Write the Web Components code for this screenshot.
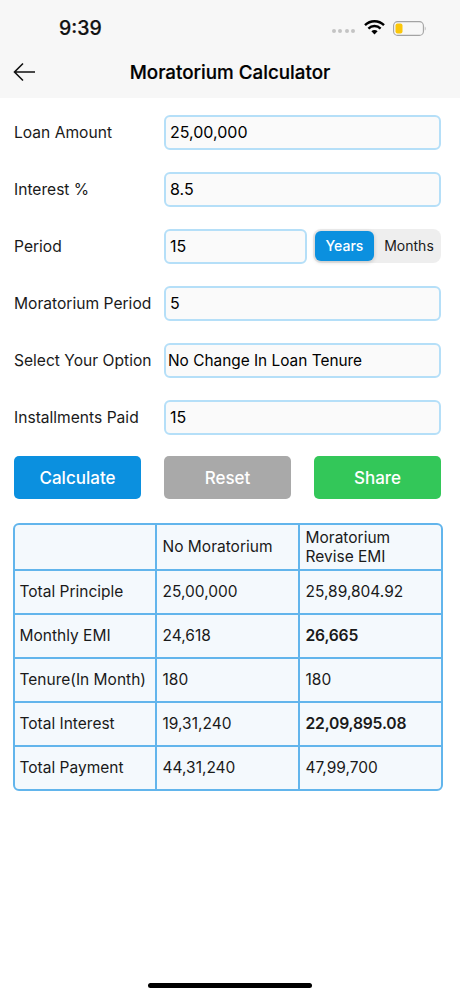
<!DOCTYPE html>
<html>
<head>
<meta charset="utf-8">
<style>
  html, body { margin: 0; padding: 0; background: #fff; }
  body { font-family: Inter, "Liberation Sans", sans-serif; color: #111; }
  calc-app { height: 997px; }
</style>
</head>
<body>
<calc-app>
  <status-bar slot="top" time="9:39"></status-bar>
  <nav-bar slot="top">Moratorium Calculator</nav-bar>
  <form-row label="Loan Amount"><text-box>25,00,000</text-box></form-row>
  <form-row label="Interest %"><text-box>8.5</text-box></form-row>
  <form-row label="Period">
    <text-box style="flex:0 0 143px">15</text-box>
    <seg-control></seg-control>
  </form-row>
  <form-row label="Moratorium Period"><text-box>5</text-box></form-row>
  <form-row label="Select Your Option"><text-box small>No Change In Loan Tenure</text-box></form-row>
  <form-row label="Installments Paid"><text-box>15</text-box></form-row>
  <button-row>
    <action-button color="#0b90df">Calculate</action-button>
    <action-button color="#a9a9a9">Reset</action-button>
    <action-button color="#33c759">Share</action-button>
  </button-row>
  <result-table></result-table>
</calc-app>

<script>
  // makes an element class from a template string
  function shadow(el, html) {
    el.attachShadow({mode: 'open'}).innerHTML = html;
  }

  class CalcApp extends HTMLElement {
    constructor() {
      super();
      shadow(this, `
        <style>
          :host { display: flex; flex-direction: column; overflow: hidden; }
          .form { display: flex; flex-direction: column; gap: 22px; padding: 17px 19px 0 14px; }
          .bar { margin: auto auto 9px; width: 164px; height: 5px; border-radius: 3px; background: #000; flex: none; }
        </style>
        <slot name="top"></slot>
        <div class="form"><slot></slot></div>
        <div class="bar"></div>
      `);
    }
  }

  class StatusBar extends HTMLElement {
    constructor() {
      super();
      shadow(this, `
        <style>
          :host { display: flex; align-items: center; height: 56px; background: #f7f7f7; box-sizing: border-box; padding: 0 34px 0 59px; }
          .time { font-size: 19.500px; font-weight: 500; color: #111; -webkit-text-stroke: .2px #111; }
          .right { margin-left: auto; display: flex; align-items: center; }
          .dots { display: flex; gap: 2.500px; margin: 6px 9px 0 0; }
          .dots i { width: 4px; height: 4px; border-radius: 50%; background: #c4c4c4; }
          .wifi { margin-top: -2px; }
          .batt { width: 33px; height: 15px; margin-left: 8px; display: block; }
        </style>
        <span class="time">${this.getAttribute('time')}</span>
        <div class="right">
          <div class="dots"><i></i><i></i><i></i><i></i></div>
          <svg class="wifi" width="21" height="16" viewBox="0 0 21 16">
            <path d="M1 6.2a13.4 13.4 0 0 1 19 0" fill="none" stroke="#000" stroke-width="2.400"/>
            <path d="M4.400 9.600a8.600 8.600 0 0 1 12.200 0" fill="none" stroke="#000" stroke-width="2.400"/>
            <path d="M7.400 12.200a4.300 4.300 0 0 1 6.200 0L10.500 15.400z" fill="#000"/>
          </svg>
          <svg class="batt" viewBox="0 0 33 15">
            <rect x=".6" y=".6" width="29.800" height="13.800" rx="4" fill="none" stroke="#a3a3a3" stroke-width="1.100"/>
            <rect x="2.500" y="2.500" width="7" height="10" rx="2" fill="#fbc70a"/>
            <path d="M31.800 5.500c.9.3 1 3.700 0 4z" fill="#a3a3a3"/>
          </svg>
        </div>
      `);
    }
  }

  class NavBar extends HTMLElement {
    constructor() {
      super();
      shadow(this, `
        <style>
          :host { display: flex; align-items: center; justify-content: center; position: relative; height: 42px; background: #f7f7f7; }
          .title { font-size: 18.800px; font-weight: 500; color: #000; margin-top: -10px; -webkit-text-stroke: .2px #000; }
          svg { position: absolute; left: 13px; top: 6px; }
        </style>
        <svg width="23" height="20" viewBox="0 0 23 20">
          <path d="M22 10H1.500M10 1.500 1.500 10l8.500 8.500" fill="none" stroke="#111" stroke-width="1.600"/>
        </svg>
        <span class="title"><slot></slot></span>
      `);
    }
  }

  class FormRow extends HTMLElement {
    constructor() {
      super();
      shadow(this, `
        <style>
          :host { display: flex; align-items: center; height: 35px; }
          label { flex: 0 0 150px; font-size: 15.600px; color: #1a1a1a; white-space: nowrap; }
          .field { flex: 1; display: flex; gap: 6px; min-width: 0; }
        </style>
        <label>${this.getAttribute('label')}</label>
        <div class="field"><slot></slot></div>
      `);
    }
  }

  class TextBox extends HTMLElement {
    constructor() {
      super();
      const small = this.hasAttribute('small');
      shadow(this, `
        <style>
          :host { display: flex; align-items: center; flex: 1; box-sizing: border-box; height: 35px; background: #fafafa;
            border: 2px solid #b5dff8; border-radius: 6px; padding: 0 ${small ? 2 : 4}px 1px;
            font-size: ${small ? 15.4 : 16}px; color: #000; }
        </style>
        <slot></slot>
      `);
    }
  }

  class SegControl extends HTMLElement {
    constructor() {
      super();
      shadow(this, `
        <style>
          :host { display: flex; flex: 1; height: 34px; box-sizing: border-box; padding: 2px; background: #eeeeee; border-radius: 8px; font-size: 14px; }
          div { display: flex; align-items: center; justify-content: center; padding-bottom: 1px; }
          .on { width: 59px; background: #0b90df; color: #fff; border-radius: 6px; box-shadow: 0 1px 4px rgba(0,0,0,.2); font-weight: 500; }
          .off { flex: 1; color: #1a1a1a; padding-left: 5px; }
        </style>
        <div class="on">Years</div>
        <div class="off">Months</div>
      `);
    }
  }

  class ButtonRow extends HTMLElement {
    constructor() {
      super();
      shadow(this, `
        <style>
          :host { display: flex; justify-content: space-between; margin-top: -1px; }
        </style>
        <slot></slot>
      `);
    }
  }

  class ActionButton extends HTMLElement {
    constructor() {
      super();
      shadow(this, `
        <style>
          :host { display: flex; align-items: center; justify-content: center; width: 127px; height: 43px; border-radius: 5px;
            background: ${this.getAttribute('color')}; color: #fff; font-size: 17px; font-weight: 500; }
        </style>
        <slot></slot>
      `);
    }
  }

  const TABLE = [
    ['', 'No Moratorium', 'Moratorium<br>Revise EMI'],
    ['Total Principle', '25,00,000', '25,89,804.92'],
    ['Monthly EMI', '24,618', '<b>26,665</b>'],
    ['Tenure(In Month)', '180', '180'],
    ['Total Interest', '19,31,240', '<b>22,09,895.08</b>'],
    ['Total Payment', '44,31,240', '47,99,700']
  ];

  class ResultTable extends HTMLElement {
    constructor() {
      super();
      const rows = TABLE.map(r => `<div class="row">${r.map(c => `<div class="cell">${c}</div>`).join('')}</div>`).join('');
      shadow(this, `
        <style>
          :host { display: block; box-sizing: border-box; width: 430px; margin: 2px 0 0 -1px; background: #f4f9fd;
            border: 2px solid #62b5ec; border-radius: 6px; font-size: 15.500px; color: #1a1a1a; }
          .row { display: grid; grid-template-columns: 140px 143px 1fr; height: 44px; box-sizing: border-box; }
          .row:first-child { height: 42px; }
          .row + .row { border-top: 2px solid #62b5ec; }
          .cell { display: flex; align-items: center; padding: 0 0 1px 4.500px; line-height: 19px; white-space: nowrap; }
          .cell + .cell { border-left: 2px solid #62b5ec; padding-left: 5.500px; }
          b { font-weight: 600; font-size: 15.700px; letter-spacing: -.2px; }
        </style>
        ${rows}
      `);
    }
  }

  customElements.define('calc-app', CalcApp);
  customElements.define('status-bar', StatusBar);
  customElements.define('nav-bar', NavBar);
  customElements.define('form-row', FormRow);
  customElements.define('text-box', TextBox);
  customElements.define('seg-control', SegControl);
  customElements.define('button-row', ButtonRow);
  customElements.define('action-button', ActionButton);
  customElements.define('result-table', ResultTable);
</script>
</body>
</html>
